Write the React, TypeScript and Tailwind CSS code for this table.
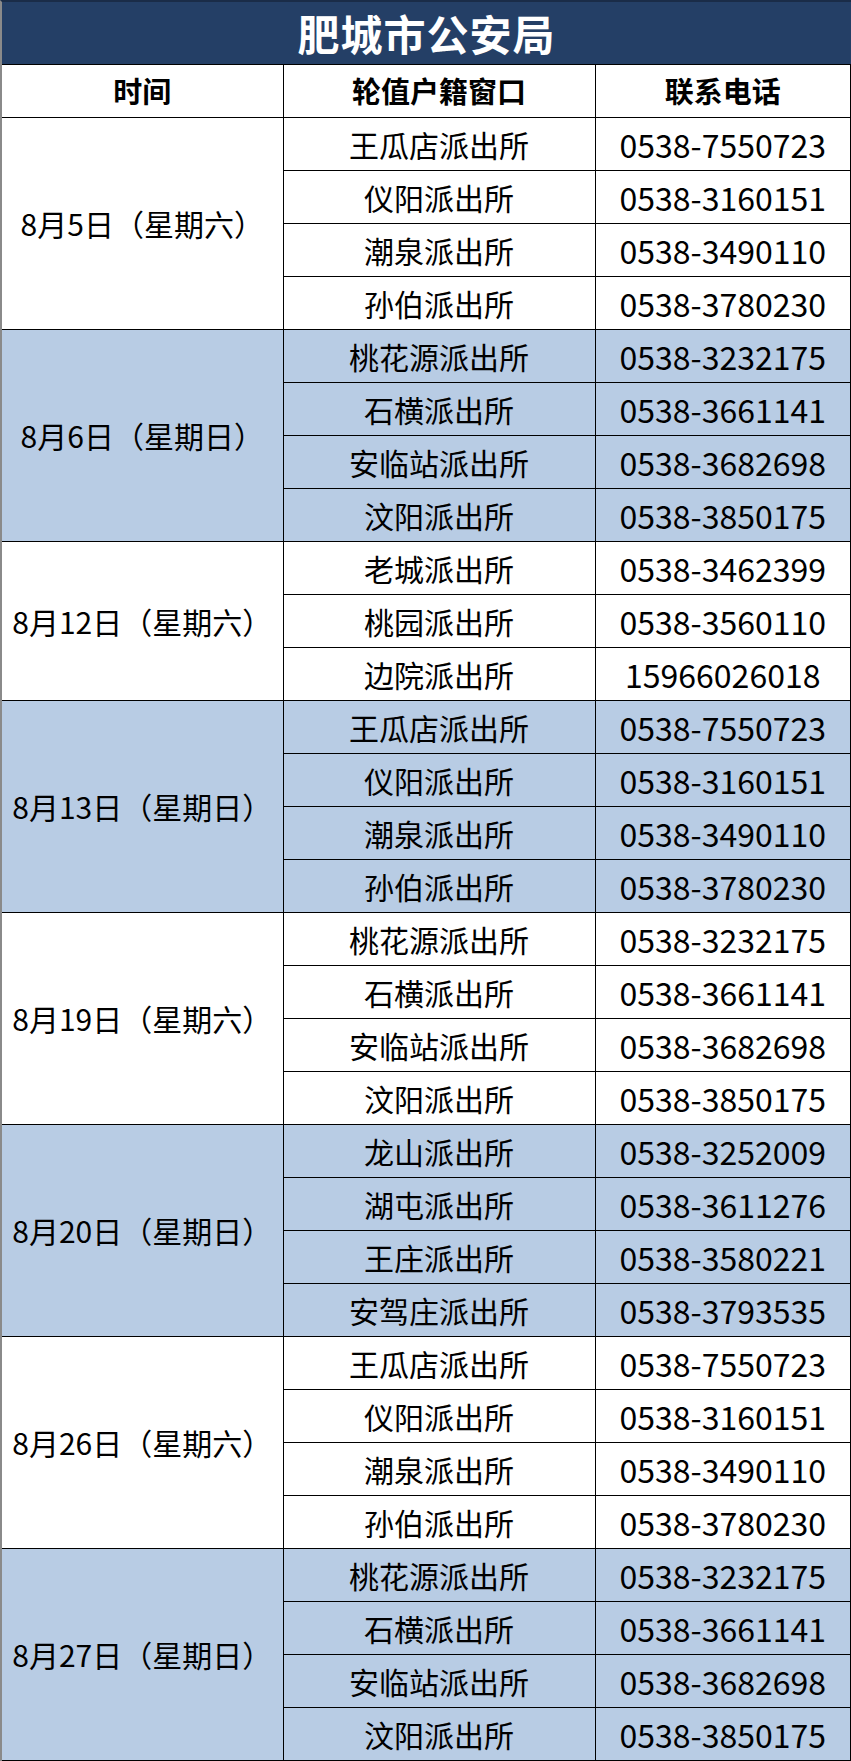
const groups = [
  {
    date: "8月5日（星期六）",
    blue: false,
    rows: [
      ["王瓜店派出所", "0538-7550723"],
      ["仪阳派出所", "0538-3160151"],
      ["潮泉派出所", "0538-3490110"],
      ["孙伯派出所", "0538-3780230"],
    ],
  },
  {
    date: "8月6日（星期日）",
    blue: true,
    rows: [
      ["桃花源派出所", "0538-3232175"],
      ["石横派出所", "0538-3661141"],
      ["安临站派出所", "0538-3682698"],
      ["汶阳派出所", "0538-3850175"],
    ],
  },
  {
    date: "8月12日（星期六）",
    blue: false,
    rows: [
      ["老城派出所", "0538-3462399"],
      ["桃园派出所", "0538-3560110"],
      ["边院派出所", "15966026018"],
    ],
  },
  {
    date: "8月13日（星期日）",
    blue: true,
    rows: [
      ["王瓜店派出所", "0538-7550723"],
      ["仪阳派出所", "0538-3160151"],
      ["潮泉派出所", "0538-3490110"],
      ["孙伯派出所", "0538-3780230"],
    ],
  },
  {
    date: "8月19日（星期六）",
    blue: false,
    rows: [
      ["桃花源派出所", "0538-3232175"],
      ["石横派出所", "0538-3661141"],
      ["安临站派出所", "0538-3682698"],
      ["汶阳派出所", "0538-3850175"],
    ],
  },
  {
    date: "8月20日（星期日）",
    blue: true,
    rows: [
      ["龙山派出所", "0538-3252009"],
      ["湖屯派出所", "0538-3611276"],
      ["王庄派出所", "0538-3580221"],
      ["安驾庄派出所", "0538-3793535"],
    ],
  },
  {
    date: "8月26日（星期六）",
    blue: false,
    rows: [
      ["王瓜店派出所", "0538-7550723"],
      ["仪阳派出所", "0538-3160151"],
      ["潮泉派出所", "0538-3490110"],
      ["孙伯派出所", "0538-3780230"],
    ],
  },
  {
    date: "8月27日（星期日）",
    blue: true,
    rows: [
      ["桃花源派出所", "0538-3232175"],
      ["石横派出所", "0538-3661141"],
      ["安临站派出所", "0538-3682698"],
      ["汶阳派出所", "0538-3850175"],
    ],
  },
];

export default function App() {
  return (
    <div
      className="w-[851px] bg-white text-black"
      style={{ fontFamily: '"Noto Sans CJK SC", "Noto Sans", sans-serif' }}
    >
      {/* Title bar */}
      <div className="h-[64px] flex items-center justify-center bg-[#243f66] border-t-2 border-[#1a2c48] border-l-2 border-l-[#8a8a8a]">
        <h1 className="text-[42px] font-bold text-white leading-none tracking-[1px]">肥城市公安局</h1>
      </div>

      <table className="w-[851px] border-collapse table-fixed">
        <colgroup>
          <col className="w-[282px]" />
          <col className="w-[312px]" />
          <col />
        </colgroup>
        <thead>
          <tr className="h-[53px] text-[29px] font-bold">
            <th className="border border-black border-l-2 border-l-[#8a8a8a] p-0">时间</th>
            <th className="border border-black p-0">轮值户籍窗口</th>
            <th className="border border-black p-0">联系电话</th>
          </tr>
        </thead>
        <tbody className="text-[30px]">
          {groups.map((g) =>
            g.rows.map(([station, phone], i) => (
              <tr key={g.date + i} className={`h-[53px] ${g.blue ? "bg-[#b8cce4]" : "bg-white"}`}>
                {i === 0 && (
                  <td
                    rowSpan={g.rows.length}
                    className="border border-black border-l-2 border-l-[#8a8a8a] p-0 text-center whitespace-nowrap"
                  >
                    {g.date}
                  </td>
                )}
                <td className="border border-black p-0 text-center">{station}</td>
                <td className="border border-black p-0 text-center text-[32px] leading-none">{phone}</td>
              </tr>
            ))
          )}
        </tbody>
      </table>
    </div>
  );
}
